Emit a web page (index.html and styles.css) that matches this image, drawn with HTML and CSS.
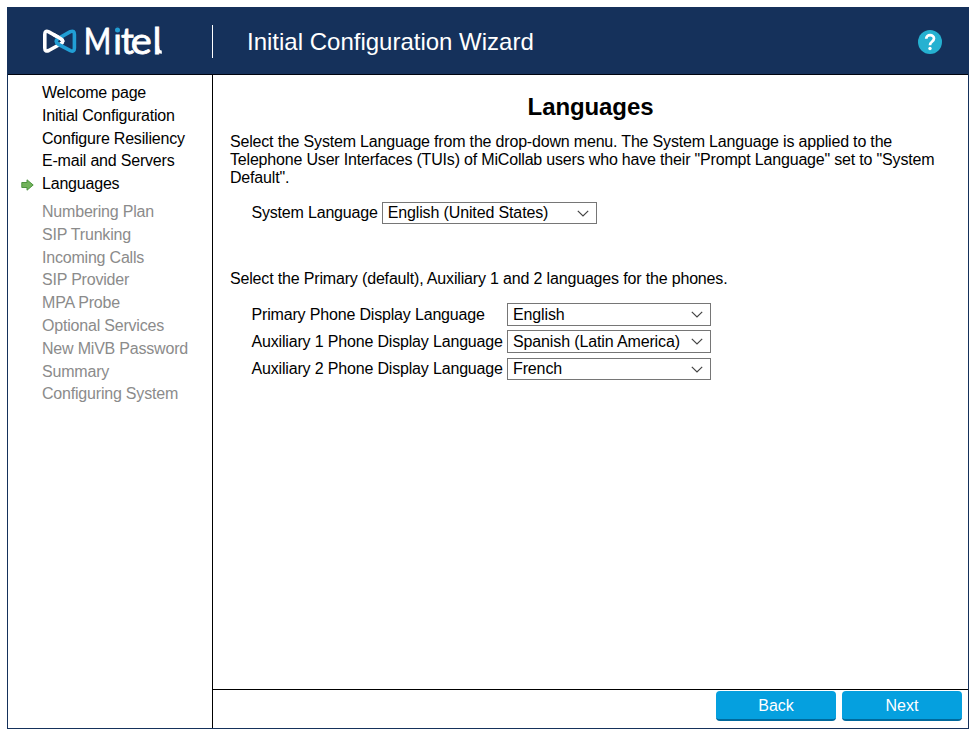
FILE: index.html
```html
<!DOCTYPE html>
<html lang="en">
<head>
<meta charset="utf-8">
<title>Initial Configuration Wizard</title>
<link rel="stylesheet" href="styles.css">
</head>
<body>
<div class="wizard">
  <header class="header">
    <div class="brand">
      <svg class="logo" width="124" height="36" viewBox="0 0 124 36" role="img" aria-label="Mitel">
        <path class="knot knot-white" d="M8.800 30.500Q4.800 32.300 4.800 28V14.500Q4.800 10 8.800 11.900L20.500 18.500Q25 21.300 20.500 24Z"/>
        <path class="knot knot-blue" d="M18.500 24.300 30.400 30.700Q34.400 32.300 34.400 28V14.500Q34.400 10 30.400 11.600L18.500 18.400Q13.800 21.300 18.500 24.300Z"/>
        <path class="knot knot-white" d="M13 14.200 20.500 18.500Q23 20 22.600 21.500"/>
        <text class="logo-text" x="43.800" y="33.500" textLength="27.500" lengthAdjust="spacingAndGlyphs">M</text>
        <text class="logo-text" x="73.200 80.900" y="33.500">it</text>
        <text class="logo-text" x="90.700" y="33.500" textLength="21" lengthAdjust="spacingAndGlyphs">e</text>
        <text class="logo-text" x="112.700" y="33.500">l</text>
        <path class="logo-tail" d="M117.400 26Q117.400 32.300 121.800 32.100"/>
        <circle class="logo-dot-base" cx="77.500" cy="10" r="4"/>
        <circle class="logo-dot" cx="77.500" cy="10" r="2.500"/>
      </svg>
    </div>
    <h1 class="title">Initial Configuration Wizard</h1>
    <svg class="help" width="24" height="24" viewBox="0 0 24 24" role="img" aria-label="Help">
      <circle class="help-disc" cx="12" cy="12" r="12"/>
      <path class="help-mark" d="M8.200 8.700C8.200 3.900 16 3.900 16 8.600C16 11.600 12 11.400 12 15.200"/>
      <circle class="help-point" cx="12" cy="18.500" r="1.700"/>
    </svg>
  </header>
  <div class="body">
    <nav class="sidebar">
      <ul class="steps">
        <li>Welcome page</li>
        <li>Initial Configuration</li>
        <li>Configure Resiliency</li>
        <li>E-mail and Servers</li>
        <li class="current"><svg class="arrow" width="13" height="12" viewBox="0 0 13 12"><path d="M.8 3.500H6V.8L12.200 6 6 11.200V8.500H.8Z"/></svg>Languages</li>
      </ul>
      <ul class="steps pending">
        <li>Numbering Plan</li>
        <li>SIP Trunking</li>
        <li>Incoming Calls</li>
        <li>SIP Provider</li>
        <li>MPA Probe</li>
        <li>Optional Services</li>
        <li>New MiVB Password</li>
        <li>Summary</li>
        <li>Configuring System</li>
      </ul>
    </nav>
    <div class="main">
      <main class="content">
        <h2>Languages</h2>
        <p>Select the System Language from the drop-down menu. The System Language is applied to the<br>Telephone User Interfaces (TUIs) of MiCollab users who have their "Prompt Language" set to "System<br>Default".</p>
        <div class="system-row">
          <span>System Language</span>
          <div class="select"><span>English (United States)</span><svg class="chevron" width="12" height="7" viewBox="0 0 12 7"><path d="M.8.8 6 6 11.200.8"/></svg></div>
        </div>
        <p class="phones-intro">Select the Primary (default), Auxiliary 1 and 2 languages for the phones.</p>
        <div class="phones">
          <span>Primary Phone Display Language</span>
          <div class="select tall"><span>English</span><svg class="chevron" width="12" height="7" viewBox="0 0 12 7"><path d="M.8.8 6 6 11.200.8"/></svg></div>
          <span>Auxiliary 1 Phone Display Language</span>
          <div class="select tall"><span>Spanish (Latin America)</span><svg class="chevron" width="12" height="7" viewBox="0 0 12 7"><path d="M.8.8 6 6 11.200.8"/></svg></div>
          <span>Auxiliary 2 Phone Display Language</span>
          <div class="select"><span>French</span><svg class="chevron" width="12" height="7" viewBox="0 0 12 7"><path d="M.8.8 6 6 11.200.8"/></svg></div>
        </div>
      </main>
      <footer class="footer">
        <button type="button">Back</button>
        <button type="button">Next</button>
      </footer>
    </div>
  </div>
</div>
</body>
</html>
```
FILE: styles.css
```css
* { box-sizing: border-box; }
body {
  margin: 0;
  padding: 7px;
  background: #fff;
  color: #000;
  font: 16px/18px "Liberation Sans", Arial, sans-serif;
}
.wizard {
  display: flex;
  flex-direction: column;
  width: 962px;
  height: 722px;
  border: 1px solid #15315b;
}
.header {
  display: flex;
  align-items: center;
  height: 67px;
  padding-right: 26px;
  background: #15315b;
  border-bottom: 1px solid #00040f;
}
.brand {
  width: 205px;
  height: 33px;
  padding-left: 32px;
  border-right: 1px solid #fff;
}
.logo { display: block; overflow: visible; margin-top: -5px; }
.knot { fill: none; stroke-width: 3.6; stroke-linejoin: round; }
.knot-white { stroke: #fff; }
.knot-blue { stroke: #219fd5; }
.logo-text { font: 36px Lato, sans-serif; fill: #fff; stroke: #fff; stroke-width: .8; }
.logo-tail { fill: none; stroke: #fff; stroke-width: 3.4; }
.logo-dot-base { fill: #15315b; }
.logo-dot { fill: #219fd5; }
.title {
  margin: 2px auto 0 34px;
  color: #fff;
  font-size: 24px;
  font-weight: 400;
  line-height: 28px;
}
.help { margin-top: 2px; }
.help-disc { fill: #25b1d1; }
.help-mark { fill: none; stroke: #fff; stroke-width: 2.7; }
.help-point { fill: #fff; }
.body { display: flex; flex: 1; min-height: 0; }
.sidebar {
  flex: none;
  width: 205px;
  padding: 7px 0 0 34px;
  border-right: 1px solid #000;
  letter-spacing: -.2px;
}
.steps { margin: 0 0 5px; padding: 0; list-style: none; line-height: 22.800px; }
.pending { color: #8b8b8b; }
.current { position: relative; }
.arrow { position: absolute; left: -21px; top: 6px; fill: #72b35b; stroke: #4e9440; stroke-width: 1; }
.main { display: flex; flex: 1; flex-direction: column; }
.content { flex: 1; padding: 18px 17px 0; }
h2 { margin: 0 0 12px; font-size: 24px; line-height: 28px; letter-spacing: -.1px; text-align: center; }
p { margin: 0; letter-spacing: -.183px; white-space: nowrap; }
.system-row { display: flex; align-items: center; gap: 4px; margin: 15px 0 0 21.500px; letter-spacing: -.19px; }
.select {
  display: flex;
  align-items: center;
  justify-content: space-between;
  width: 215px;
  height: 22px;
  padding: 0 7px 0 5px;
  border: 1px solid #767676;
  letter-spacing: -.13px;
  white-space: nowrap;
}
.chevron { fill: none; stroke: #444; stroke-width: 1.2; }
.phones-intro { margin-top: 46px; letter-spacing: -.167px; }
.phones {
  display: grid;
  grid-template-columns: 251.500px 204px;
  grid-template-rows: 23px 24px 22px;
  gap: 4px;
  align-items: center;
  margin: 15px 0 0 21.500px;
  letter-spacing: -.17px;
  white-space: nowrap;
}
.phones .select { width: 204px; }
.phones .tall { align-self: start; height: 23px; }
.footer {
  display: flex;
  justify-content: flex-end;
  gap: 6px;
  height: 39px;
  padding: 1px 6px 0;
  border-top: 1px solid #000;
}
button {
  width: 120px;
  height: 30px;
  padding: 1px 0 0;
  border: 0;
  border-bottom: 2px solid #00699c;
  border-radius: 4px;
  background: #05a0df;
  color: #fff;
  font: inherit;
}
```
